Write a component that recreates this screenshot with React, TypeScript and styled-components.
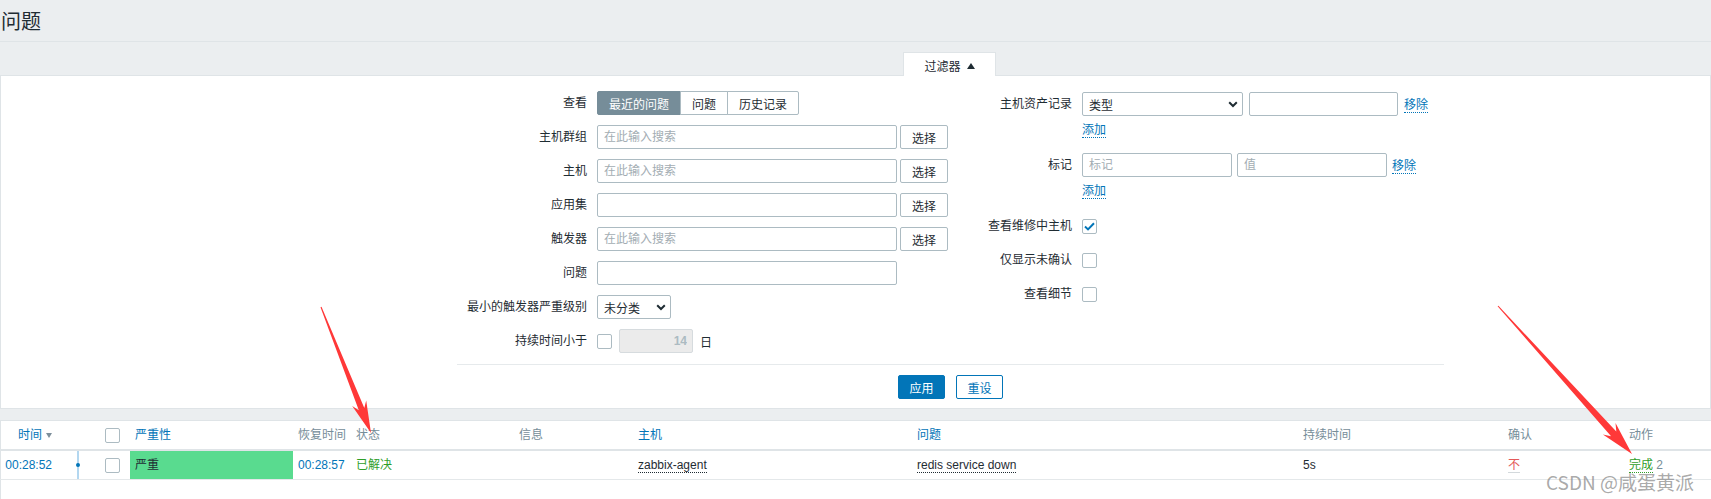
import React from 'react';
import styled, { createGlobalStyle } from 'styled-components';

const GlobalStyle = createGlobalStyle`
  html, body {
    margin: 0;
    padding: 0;
  }
  body {
    background: #ebeef0;
    color: #1f2c33;
    font-family: 'Liberation Sans', 'Noto Sans CJK SC', Arial, sans-serif;
    font-size: 12px;
  }
  * {
    box-sizing: border-box;
  }
`;

const Page = styled.div`
  position: relative;
  width: 1711px;
  height: 499px;
  overflow: hidden;
  display: flex;
  flex-direction: column;
  background: #ebeef0;
`;

const Header = styled.header`
  height: 42px;
  padding: 3px 0 0 1px;
  display: flex;
  align-items: center;
  border-bottom: 1px solid #dfe4e7;
`;

const Title = styled.h1`
  margin: 0;
  font-size: 20px;
  font-weight: 400;
  line-height: 24px;
  color: #1f2c33;
`;

const TabStrip = styled.div`
  height: 33px;
  display: flex;
  align-items: flex-end;
  padding-left: 903px;
`;

const FilterTab = styled.div`
  position: relative;
  z-index: 1;
  width: 93px;
  height: 24px;
  margin-bottom: -1px;
  padding-top: 2px;
  display: flex;
  align-items: center;
  justify-content: center;
  gap: 6px;
  background: #fff;
  border: 1px solid #dfe4e7;
  border-bottom: none;
`;

const TriangleUp = styled.span`
  width: 0;
  height: 0;
  border-left: 4px solid transparent;
  border-right: 4px solid transparent;
  border-bottom: 6px solid #1f2c33;
`;

const FilterPanel = styled.section`
  background: #fff;
  border: 1px solid #dfe4e7;
  padding: 15px 0 9px 456px;
`;

const FilterBody = styled.div`
  width: 987px;
`;

const Columns = styled.div`
  display: flex;
`;

const FormGrid = styled.div<{ $label: number; $width: number; $top?: number }>`
  width: ${p => p.$width}px;
  padding-top: ${p => p.$top ?? 0}px;
  display: grid;
  grid-template-columns: ${p => p.$label}px 1fr;
  column-gap: 10px;
  row-gap: 10px;
  align-items: start;
  align-content: start;
`;

const Label = styled.div`
  text-align: right;
  line-height: 24px;
  white-space: nowrap;
`;

const Field = styled.div<{ $gap?: number }>`
  display: flex;
  align-items: center;
  gap: ${p => p.$gap ?? 3}px;
  min-height: 24px;
`;

const FieldStack = styled.div`
  display: flex;
  flex-direction: column;
  align-items: flex-start;
`;

const AddRow = styled.div`
  margin: 6px 0 5px;
  line-height: 16px;
`;

const Segmented = styled.div`
  display: flex;
`;

const Segment = styled.button<{ $active?: boolean }>`
  height: 24px;
  padding: 0 11px;
  margin-left: -1px;
  font: inherit;
  border-radius: 0;
  border: 1px solid ${p => (p.$active ? '#768d99' : '#acbbc2')};
  background: ${p => (p.$active ? '#768d99' : '#fff')};
  color: ${p => (p.$active ? '#fff' : '#1f2c33')};
  &:first-child {
    margin-left: 0;
    border-radius: 2px 0 0 2px;
  }
  &:last-child {
    border-radius: 0 2px 2px 0;
  }
`;

const TextInput = styled.input<{ $w: number }>`
  width: ${p => p.$w}px;
  height: 24px;
  padding: 0 6px;
  border: 1px solid #acbbc2;
  border-radius: 2px;
  background: #fff;
  font: inherit;
  color: #1f2c33;
  outline: none;
  &::placeholder {
    color: #a3adb3;
  }
  &:disabled {
    background: #ebebeb;
    border-color: #d6dbde;
    color: #acbbc2;
    text-align: right;
    font-weight: 700;
    padding-right: 5px;
  }
`;

const GreyButton = styled.button`
  width: 48px;
  height: 24px;
  padding: 0;
  font: inherit;
  color: #1f2c33;
  background: #fff;
  border: 1px solid #acbbc2;
  border-radius: 2px;
`;

const SelectBox = styled.div<{ $w: number }>`
  width: ${p => p.$w}px;
  height: 24px;
  padding: 0 4px 0 6px;
  display: flex;
  align-items: center;
  justify-content: space-between;
  border: 1px solid #acbbc2;
  border-radius: 2px;
  background: #fff;
`;

const Box = styled.span`
  flex: none;
  width: 15px;
  height: 15px;
  display: inline-flex;
  align-items: center;
  justify-content: center;
  border: 1px solid #acbbc2;
  border-radius: 2px;
  background: #fff;
`;

const DottedLink = styled.a<{ $color?: string }>`
  color: ${p => p.$color ?? '#0275b8'};
  text-decoration: none;
  border-bottom: 1px dotted ${p => p.$color ?? '#0275b8'};
  cursor: pointer;
`;

const Separator = styled.div`
  height: 1px;
  background: #e6eaec;
  margin: 11px 0 10px;
`;

const ActionBar = styled.div`
  display: flex;
  justify-content: center;
  gap: 11px;
`;

const ActionButton = styled.button<{ $primary?: boolean }>`
  width: 47px;
  height: 24px;
  padding: 0;
  font: inherit;
  border-radius: 2px;
  border: 1px solid #0275b8;
  background: ${p => (p.$primary ? '#0275b8' : '#fff')};
  color: ${p => (p.$primary ? '#fff' : '#0275b8')};
`;

const COLS = '58px 40px 32px 163px 58px 163px 119px 279px 386px 205px 121px 1fr';

const TableWrap = styled.section`
  flex: 1;
  margin-top: 11px;
  background: #fff;
  border-top: 1px solid #dfe4e7;
  border-left: 1px solid #dfe4e7;
`;

const HeadRow = styled.div`
  display: grid;
  grid-template-columns: ${COLS};
  height: 30px;
  margin-left: -1px;
  border-bottom: 2px solid #dfe4e7;
  color: #768d99;
`;

const DataRow = styled.div`
  display: grid;
  grid-template-columns: ${COLS};
  height: 29px;
  margin-left: -1px;
  border-bottom: 1px solid #e4e8ea;
`;

const Cell = styled.div<{ $right?: boolean; $bg?: string; $color?: string; $pad?: number }>`
  display: flex;
  align-items: center;
  justify-content: ${p => (p.$right ? 'flex-end' : 'flex-start')};
  gap: 4px;
  padding: ${p => (p.$right ? '0 6px 0 0' : `0 0 0 ${p.$pad ?? 5}px`)};
  background: ${p => p.$bg ?? 'transparent'};
  color: ${p => p.$color ?? 'inherit'};
  line-height: 14px;
  white-space: nowrap;
`;

const SortLabel = styled.span`
  color: #0275b8;
`;

const TriangleDown = styled.span`
  width: 0;
  height: 0;
  border-left: 3.5px solid transparent;
  border-right: 3.5px solid transparent;
  border-top: 5px solid #7d8f9b;
`;

const TimelineCell = styled.div`
  display: flex;
  justify-content: center;
`;

const TimelineAxis = styled.div`
  position: relative;
  width: 2px;
  background: #b3d7f0;
  &::after {
    content: '';
    position: absolute;
    left: -1px;
    top: 12px;
    width: 4px;
    height: 4px;
    border-radius: 50%;
    background: #0275b8;
  }
`;

const Link = styled.span<{ $color?: string }>`
  color: ${p => p.$color ?? '#0275b8'};
`;

const Muted = styled.span`
  color: #768d99;
`;

const AckLink = styled.span`
  color: #e45959;
  border-bottom: 1px solid #d3d9dc;
`;

const Overlay = styled.svg`
  position: absolute;
  left: 0;
  top: 0;
  pointer-events: none;
`;

const Watermark = styled.div`
  position: absolute;
  left: 1546px;
  top: 473px;
  font-family: 'Noto Sans CJK SC', 'Liberation Sans', sans-serif;
  font-size: 19px;
  line-height: 17px;
  color: rgba(128, 128, 128, 0.68);
  white-space: nowrap;
  pointer-events: none;
`;

function Chevron() {
  return (
    <svg width="10" height="7" viewBox="0 0 10 7">
      <path d="M1.2 1.3 L5 5 L8.8 1.3" fill="none" stroke="#1f2c33" strokeWidth="2" />
    </svg>
  );
}

function CheckMark() {
  return (
    <svg width="11" height="9" viewBox="0 0 11 9">
      <path d="M1 4.6 L4 7.4 L10 1.2" fill="none" stroke="#0275b8" strokeWidth="2" />
    </svg>
  );
}

function arrowPoints(x1: number, y1: number, x2: number, y2: number, head: number, headW: number, neck: number, tail: number) {
  const len = Math.hypot(x2 - x1, y2 - y1);
  const ux = (x2 - x1) / len;
  const uy = (y2 - y1) / len;
  const px = -uy;
  const py = ux;
  const bx = x2 - ux * head;
  const by = y2 - uy * head;
  const nx = x2 - ux * head * 0.8;
  const ny = y2 - uy * head * 0.8;
  const pts = [
    [x1 + (px * tail) / 2, y1 + (py * tail) / 2],
    [nx + (px * neck) / 2, ny + (py * neck) / 2],
    [bx + (px * headW) / 2, by + (py * headW) / 2],
    [x2, y2],
    [bx - (px * headW) / 2, by - (py * headW) / 2],
    [nx - (px * neck) / 2, ny - (py * neck) / 2],
    [x1 - (px * tail) / 2, y1 - (py * tail) / 2],
  ];
  return pts.map(p => `${p[0].toFixed(1)},${p[1].toFixed(1)}`).join(' ');
}

export default function App() {
  return (
    <>
      <GlobalStyle />
      <Page>
        <Header>
          <Title>问题</Title>
        </Header>

        <TabStrip>
          <FilterTab>
            过滤器 <TriangleUp />
          </FilterTab>
        </TabStrip>

        <FilterPanel>
          <FilterBody>
            <Columns>
              <FormGrid $label={130} $width={493}>
                <Label>查看</Label>
                <Field>
                  <Segmented>
                    <Segment $active>最近的问题</Segment>
                    <Segment>问题</Segment>
                    <Segment>历史记录</Segment>
                  </Segmented>
                </Field>

                <Label>主机群组</Label>
                <Field>
                  <TextInput $w={300} placeholder="在此输入搜索" />
                  <GreyButton>选择</GreyButton>
                </Field>

                <Label>主机</Label>
                <Field>
                  <TextInput $w={300} placeholder="在此输入搜索" />
                  <GreyButton>选择</GreyButton>
                </Field>

                <Label>应用集</Label>
                <Field>
                  <TextInput $w={300} />
                  <GreyButton>选择</GreyButton>
                </Field>

                <Label>触发器</Label>
                <Field>
                  <TextInput $w={300} placeholder="在此输入搜索" />
                  <GreyButton>选择</GreyButton>
                </Field>

                <Label>问题</Label>
                <Field>
                  <TextInput $w={300} />
                </Field>

                <Label>最小的触发器严重级别</Label>
                <Field>
                  <SelectBox $w={74}>
                    未分类
                    <Chevron />
                  </SelectBox>
                </Field>

                <Label>持续时间小于</Label>
                <Field $gap={7}>
                  <Box />
                  <TextInput $w={74} value="14" disabled readOnly />
                  <span>日</span>
                </Field>
              </FormGrid>

              <FormGrid $label={122} $width={494} $top={1}>
                <Label>主机资产记录</Label>
                <FieldStack>
                  <Field $gap={6}>
                    <SelectBox $w={161}>
                      类型
                      <Chevron />
                    </SelectBox>
                    <TextInput $w={149} />
                    <DottedLink>移除</DottedLink>
                  </Field>
                  <AddRow>
                    <DottedLink>添加</DottedLink>
                  </AddRow>
                </FieldStack>

                <Label>标记</Label>
                <FieldStack>
                  <Field $gap={5}>
                    <TextInput $w={150} placeholder="标记" />
                    <TextInput $w={150} placeholder="值" />
                    <DottedLink>移除</DottedLink>
                  </Field>
                  <AddRow>
                    <DottedLink>添加</DottedLink>
                  </AddRow>
                </FieldStack>

                <Label>查看维修中主机</Label>
                <Field>
                  <Box>
                    <CheckMark />
                  </Box>
                </Field>

                <Label>仅显示未确认</Label>
                <Field>
                  <Box />
                </Field>

                <Label>查看细节</Label>
                <Field>
                  <Box />
                </Field>
              </FormGrid>
            </Columns>

            <Separator />

            <ActionBar>
              <ActionButton $primary>应用</ActionButton>
              <ActionButton>重设</ActionButton>
            </ActionBar>
          </FilterBody>
        </FilterPanel>

        <TableWrap>
          <HeadRow>
            <Cell $right>
              <SortLabel>时间</SortLabel>
              <TriangleDown />
            </Cell>
            <div />
            <Cell $pad={7}>
              <Box />
            </Cell>
            <Cell>
              <SortLabel>严重性</SortLabel>
            </Cell>
            <Cell>恢复时间</Cell>
            <Cell>状态</Cell>
            <Cell>信息</Cell>
            <Cell>
              <SortLabel>主机</SortLabel>
            </Cell>
            <Cell>
              <SortLabel>问题</SortLabel>
            </Cell>
            <Cell>持续时间</Cell>
            <Cell>确认</Cell>
            <Cell>动作</Cell>
          </HeadRow>

          <DataRow>
            <Cell $right>
              <Link>00:28:52</Link>
            </Cell>
            <TimelineCell>
              <TimelineAxis />
            </TimelineCell>
            <Cell $pad={7}>
              <Box />
            </Cell>
            <Cell $bg="#59db8f">严重</Cell>
            <Cell>
              <Link>00:28:57</Link>
            </Cell>
            <Cell $color="#2f9e2a">已解决</Cell>
            <Cell />
            <Cell>
              <DottedLink $color="#1f2c33">zabbix-agent</DottedLink>
            </Cell>
            <Cell>
              <DottedLink $color="#1f2c33">redis service down</DottedLink>
            </Cell>
            <Cell>5s</Cell>
            <Cell>
              <AckLink>不</AckLink>
            </Cell>
            <Cell>
              <span>
                <DottedLink $color="#2f9e2a">完成</DottedLink> <Muted>2</Muted>
              </span>
            </Cell>
          </DataRow>
        </TableWrap>

        <Overlay width="1711" height="499" viewBox="0 0 1711 499">
          <polygon points={arrowPoints(321, 307, 371, 433, 32, 15, 6, 1)} fill="#ff3838" />
          <polygon points={arrowPoints(1498, 306, 1632, 454, 34, 17, 7, 1)} fill="#ff3838" />
        </Overlay>

        <Watermark>CSDN @咸蛋黄派</Watermark>
      </Page>
    </>
  );
}
